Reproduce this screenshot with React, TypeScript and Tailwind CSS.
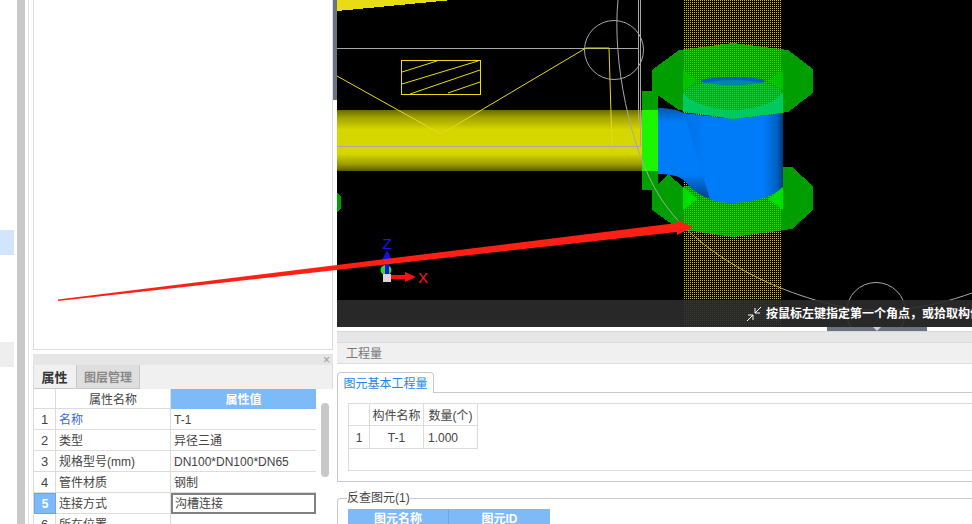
import React from 'react';

const font = { fontFamily: '"Liberation Sans", "Noto Sans CJK SC", sans-serif' };

// property grid rows
const propRows = [
  { no: '1', name: '名称', value: 'T-1', link: true },
  { no: '2', name: '类型', value: '异径三通' },
  { no: '3', name: '规格型号(mm)', value: 'DN100*DN100*DN65' },
  { no: '4', name: '管件材质', value: '钢制' },
  { no: '5', name: '连接方式', value: '沟槽连接', active: true },
  { no: '6', name: '所在位置', value: '' },
];

const CadDrawing = () => (
  <svg className="block h-full w-full" viewBox="337 0 635 327" shapeRendering="crispEdges">
    <defs>
      <linearGradient id="pipe" x1="0" y1="0" x2="0" y2="1">
        <stop offset="0" stopColor="#6a6a00" />
        <stop offset="0.12" stopColor="#a0a000" />
        <stop offset="0.32" stopColor="#d6d600" />
        <stop offset="0.72" stopColor="#d6d600" />
        <stop offset="0.88" stopColor="#a0a000" />
        <stop offset="1" stopColor="#5a5a00" />
      </linearGradient>
      <linearGradient id="body" x1="0" y1="0" x2="1" y2="0">
        <stop offset="0" stopColor="#0070e4" />
        <stop offset="0.22" stopColor="#007cf8" />
        <stop offset="0.8" stopColor="#007cfa" />
        <stop offset="0.94" stopColor="#0060c0" />
        <stop offset="1" stopColor="#003a78" />
      </linearGradient>
      <linearGradient id="branch" x1="0" y1="0" x2="0" y2="1">
        <stop offset="0" stopColor="#0058b0" />
        <stop offset="0.15" stopColor="#007cf8" />
        <stop offset="0.72" stopColor="#007cf8" />
        <stop offset="1" stopColor="#003f80" />
      </linearGradient>
      <pattern id="dots" width="2" height="2" patternUnits="userSpaceOnUse">
        <rect width="1" height="1" fill="#ccbc50" />
      </pattern>
    </defs>

    <rect x="337" y="0" width="635" height="327" fill="#000" />

    {/* top sliver and pipe */}
    <polygon points="337,0 452,0 337,11" fill="#e8dc14" />
    <rect x="337" y="110" width="305" height="61" fill="url(#pipe)" />
    <polygon points="337,193 341,196 341,208 337,212" fill="#00a000" />

    {/* wireframe */}
    <g fill="none" strokeWidth="1" shapeRendering="auto">
      <path d="M337 48.5H638M640.5 0V146.5H337M638.5 0V124" stroke="#a8a8a8" />
      <circle cx="614" cy="50" r="29.5" stroke="#a8a8a8" />
      <path d="M337 76L441 134L586 48H609L612 146" stroke="#e6d81a" />
      <rect x="401.5" y="60.5" width="79" height="34" stroke="#ecdc10" />
      <path d="M402 72L437 61M402 84L478 61M410 94L480 70M448 93L480 82" stroke="#ecdc10" />
    </g>

    {/* dithered riser sits under the translucent flanges */}
    <rect x="683" y="0" width="99" height="327" fill="url(#dots)" />

    {/* flanges */}
    <g opacity="0.7">
      <polygon points="652,70 679,50 733,43 788,50 813,69 813,93 788,112 733,119 679,110 652,91" fill="#00e200" />
      <polygon points="652,190 668,174 683,187 783,167 792,167 813,186 813,210 792,229 733,237 679,229 652,210" fill="#00e200" />
    </g>
    <rect x="642" y="91" width="16" height="99" fill="#009f00" />
    <rect x="642" y="110" width="16" height="61" fill="#1cf500" />

    {/* tee body */}
    <g shapeRendering="auto">
      <polygon points="683,70 698,81 683,91" fill="#00c800" opacity="0.8" />
      <polygon points="783,70 768,81 783,91" fill="#00c800" opacity="0.8" />
      <ellipse cx="733" cy="81" rx="32" ry="4" fill="#0060c8" />
      <path d="M658 108C670 108 680 110 690 116L714 200C700 196 692 190 686 182C680 176 670 174 658 174Z" fill="url(#branch)" />
      <path d="M684 113L733 119L783 113V188C770 198 750 203 733 203C724 203 716 202 710 199Z" fill="url(#body)" />
      <polygon points="683,187 698,199 683,210" fill="#00e000" />
      <polygon points="783,187 768,199 783,210" fill="#00e000" />
      <ellipse cx="733" cy="95" rx="50" ry="15" fill="#00cc66" opacity="0.35" />
      <path d="M683 92C690 105 720 110 733 110C750 110 775 105 783 92V113L733 119L683 112Z" fill="#00cc66" opacity="0.92" />
    </g>

    {/* construction arc drawn over the model */}
    <path d="M618 0C612 60 630 150 660 197C690 245 760 290 847 308C890 314 930 308 972 293" fill="none" stroke="#a8a8a8" shapeRendering="auto" />

    {/* axis gizmo */}
    <g shapeRendering="auto">
      <ellipse cx="386" cy="270" rx="5.5" ry="5" fill="#28e028" />
      <rect x="385" y="258" width="4" height="16" fill="#1010f0" />
      <polygon points="387,250 382,260 392,260" fill="#1010f0" />
      <rect x="383" y="274" width="8" height="8" fill="#d8d8d8" />
      <rect x="391" y="275" width="15" height="4" fill="#ff1010" />
      <polygon points="405,272 416,277 405,282" fill="#ff1010" />
      <text x="387" y="249" textAnchor="middle" fontSize="15" fill="#1818ff" style={font}>Z</text>
      <text x="423" y="283" textAnchor="middle" fontSize="15" fill="#ff1818" style={font}>X</text>
    </g>

    <circle cx="876" cy="312" r="29.5" fill="none" stroke="#a8a8a8" shapeRendering="auto" />
  </svg>
);

const App = () => {
  return (
    <div className="relative flex h-[524px] w-[972px] overflow-hidden bg-white text-xs text-[#444]" style={font}>
      {/* far left strip */}
      <div className="flex w-[14px] shrink-0 flex-col">
        <div className="mt-[230px] h-[25px] bg-[#d2e5fc]" />
        <div className="mt-[87px] h-[25px] bg-[#eeeeee]" />
      </div>
      <div className="ml-[3px] w-2 shrink-0 bg-[#c9c9c9]" />
      <div className="ml-[3px] w-px shrink-0 bg-[#e2e2e2]" />

      {/* left column */}
      <div className="ml-1 flex w-[300px] shrink-0 flex-col">
        <div className="h-[350px] shrink-0 border-x border-b border-[#dcdcdc] bg-white" />
        <div className="mt-1 flex h-[11px] shrink-0 items-center justify-end bg-[#e6e6e6] pr-[3px] text-[12px] leading-none text-[#999]">×</div>
        <div className="flex h-[24px] shrink-0 border-x border-[#dcdcdc] bg-[#f0f0f0]">
          <div className="flex h-[24px] w-[41px] items-center justify-center border-b border-[#c8c8c8] bg-[#f0f0f0] pt-[2px] text-[13px] font-bold text-[#333]">属性</div>
          <div className="ml-px flex h-[24px] w-[64px] items-center justify-center border border-t-0 border-[#c8c8c8] bg-[#dedede] pt-[2px] font-bold text-[#888]">图层管理</div>
        </div>
        <div className="relative flex-1 border-l border-[#dcdcdc]">
          <div className="grid w-[282px] grid-cols-[22px_115px_145px]">
            <div className="h-5 border-r border-b border-[#dcdcdc]" />
            <div className="flex h-5 items-center justify-center border-r border-b border-[#dcdcdc] pt-[2px]">属性名称</div>
            <div className="flex h-5 items-center justify-center border-b border-[#7eb9f8] bg-[#7eb9f8] pt-[2px] font-bold text-white">属性值</div>
            {propRows.map((row) => (
              <React.Fragment key={row.no}>
                <div className={row.active
                  ? 'flex h-[21px] items-center justify-center border border-[#6aa6e8] bg-[#7eb9f8] pt-px font-bold text-white'
                  : 'flex h-[21px] items-center justify-center border-r border-b border-[#dcdcdc] pt-[2px] text-[13px]'}>
                  {row.no}
                </div>
                <div className={row.link
                  ? 'flex h-[21px] items-center border-r border-b border-[#dcdcdc] pt-[2px] pl-[3px] text-[#2a6fe0]'
                  : 'flex h-[21px] items-center border-r border-b border-[#dcdcdc] pt-[2px] pl-[3px]'}>
                  {row.name}
                </div>
                <div className={row.active
                  ? 'flex h-[21px] items-center border-2 border-[#808080] pt-px pl-[2px]'
                  : 'flex h-[21px] items-center border-b border-[#dcdcdc] pt-[2px] pl-[3px]'}>
                  {row.value}
                </div>
              </React.Fragment>
            ))}
          </div>
          <div className="absolute left-[287px] top-[14px] h-[74px] w-2 rounded bg-[#c8c8c8]" />
        </div>
      </div>

      {/* splitter */}
      <div className="w-1 shrink-0">
        <div className="h-[100px] w-1 bg-[#6b7280]" />
      </div>

      {/* right column */}
      <div className="flex min-w-0 flex-1 flex-col">
        <div className="relative h-[327px] shrink-0 overflow-hidden">
          <CadDrawing />
          <div className="absolute inset-x-0 bottom-0 flex h-[27px] items-center bg-[#2c2c2c]/90 pl-[409px] font-bold whitespace-nowrap text-white">
            <svg className="mr-1 shrink-0" width="16" height="16" viewBox="0 0 16 16" fill="none" stroke="#fff" strokeWidth="1">
              <path d="M15 1L9 7M9 2V7H14M1 15L7 9M2 9H7V14" />
            </svg>
            按鼠标左键指定第一个角点，或拾取构件图元
          </div>
        </div>
        <div className="flex h-[4px] shrink-0 justify-end pr-[45px]">
          <div className="flex h-[4px] w-[100px] justify-center bg-[#6b7280]">
            <div className="h-0 w-0 border-x-[4px] border-t-[4px] border-x-transparent border-t-[#cfd3d8]" />
          </div>
        </div>
        <div className="h-[11px] shrink-0 border-t border-[#d8d8d8] bg-[#e6e6e6]" />
        <div className="flex h-[22px] shrink-0 items-center border-y border-[#dcdcdc] bg-[#f0f0f0] pt-[2px] pl-[9px] text-[#777]">工程量</div>

        <div className="mt-[8px] flex h-[21px] shrink-0">
          <div className="flex w-[97px] items-center justify-center rounded-t border border-b-0 border-[#c8c8d0] pt-[2px] text-[#1e88e5]">图元基本工程量</div>
          <div className="flex-1 border-b border-[#c8c8d0]" />
        </div>
        <div className="h-[89px] shrink-0 border-b border-l border-[#c8c8d0] pt-[10px] pl-[10px]">
          <div className="h-[68px] border border-r-0 border-[#dcdcdc]">
            <div className="grid w-[129px] grid-cols-[21px_54px_54px]">
              <div className="h-[22px] border-r border-b border-[#dcdcdc]" />
              <div className="flex h-[22px] items-center justify-center border-r border-b border-[#dcdcdc] pt-[2px]">构件名称</div>
              <div className="flex h-[22px] items-center justify-center border-r border-b border-[#dcdcdc] pt-[2px]">数量(个)</div>
              <div className="flex h-[23px] items-center justify-center border-r border-b border-[#dcdcdc] pt-[2px]">1</div>
              <div className="flex h-[23px] items-center justify-center border-r border-b border-[#dcdcdc] pt-[2px]">T-1</div>
              <div className="flex h-[23px] items-center border-r border-b border-[#dcdcdc] pt-[2px] pl-1">1.000</div>
            </div>
          </div>
        </div>

        <div className="relative mt-[16px] flex-1 rounded-tl border-t border-l border-[#c8c8d0] pt-[10px] pl-[10px]">
          <div className="absolute top-[-9px] left-[9px] bg-white leading-[16px]">反查图元(1)</div>
          <div className="grid w-[202px] grid-cols-2 font-bold text-white">
            <div className="flex h-5 items-center justify-center border-r border-[#6aa6e8] bg-[#7eb9f8]">图元名称</div>
            <div className="flex h-5 items-center justify-center bg-[#7eb9f8]">图元ID</div>
          </div>
        </div>
      </div>

      {/* red annotation arrow */}
      <svg className="pointer-events-none absolute inset-0" width="972" height="524" viewBox="0 0 972 524">
        <polygon points="58,299.5 677,223 677,220 693,227 677,235 677,232 58,301" fill="#ff2015" />
      </svg>
    </div>
  );
};

export default App;
